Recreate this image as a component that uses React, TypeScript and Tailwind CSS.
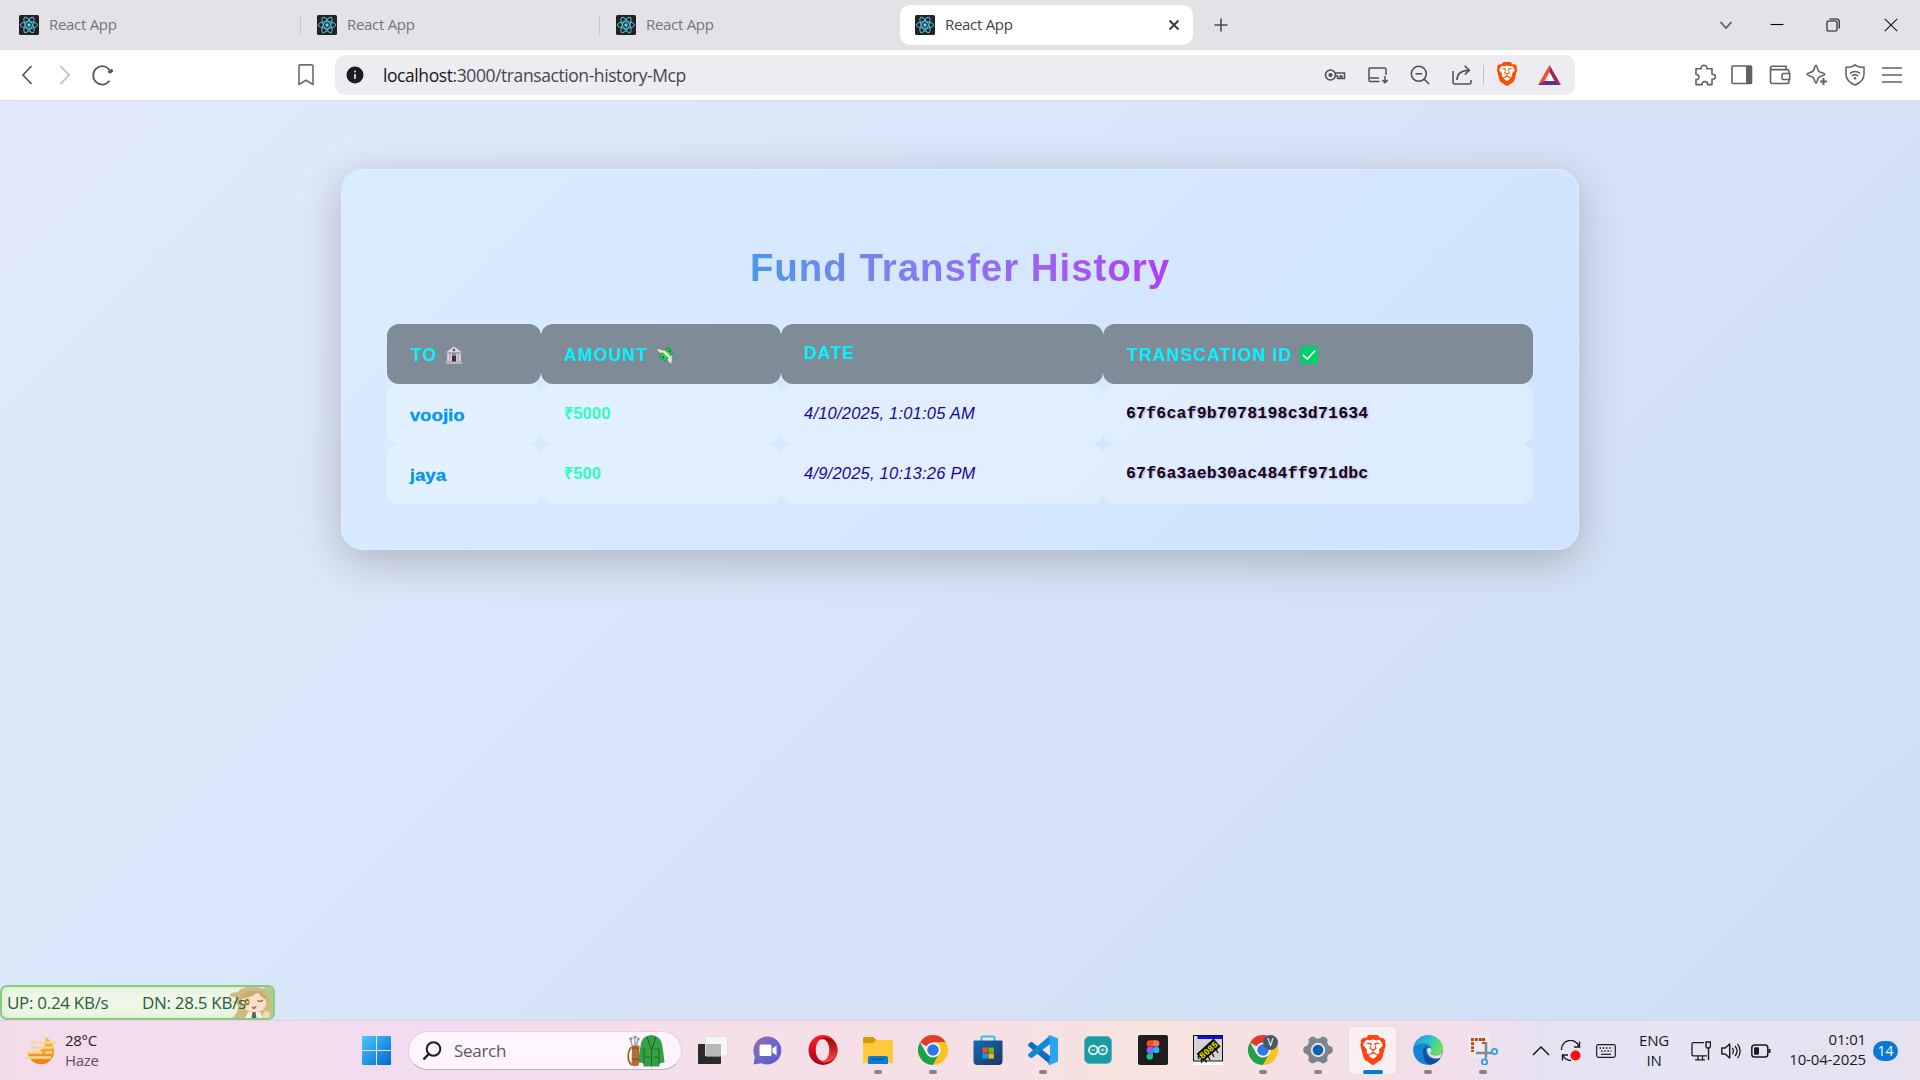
import React from "react";
import { SiBrave } from "react-icons/si";

type SvgProps = { w: number; h: number; vb?: string; className?: string; children: React.ReactNode };

function Svg({ w, h, vb, className, children }: SvgProps) {
  return (
    <svg width={w} height={h} viewBox={vb ?? `0 0 ${w} ${h}`} fill="none" className={className ?? "shrink-0"}>
      {children}
    </svg>
  );
}

/* ---------- Browser chrome ---------- */

function ReactFavicon() {
  return (
    <Svg w={20} h={20}>
      <rect width="20" height="20" rx="1.5" fill="#222222" />
      <g stroke="#53c1de" strokeWidth="1">
        <ellipse cx="10" cy="10" rx="8.6" ry="3.3" />
        <ellipse cx="10" cy="10" rx="8.6" ry="3.3" transform="rotate(60 10 10)" />
        <ellipse cx="10" cy="10" rx="8.6" ry="3.3" transform="rotate(120 10 10)" />
      </g>
      <circle cx="10" cy="10" r="1.7" fill="#61dafb" />
    </Svg>
  );
}

function Tab({ className, last }: { className: string; last?: boolean }) {
  return (
    <div className={`flex h-10 items-center ${className}`}>
      <ReactFavicon />
      <span className="mb-[2px] ml-[10px] text-[15px] tracking-[-0.3px] text-[#74757b]">React App</span>
      {!last && <span className="ml-auto h-5 w-px bg-[#c9c8cf]" />}
    </div>
  );
}

function TabBar() {
  return (
    <div className="flex h-[50px] items-center bg-[#e3e2e7]">
      <Tab className="ml-[19px] w-[282px]" />
      <Tab className="ml-4 w-[283px]" />
      <Tab className="ml-4 w-[284px]" last />
      <div className="flex h-10 w-[293px] items-center rounded-[10px] bg-white pr-[13px] pl-[15px]">
        <ReactFavicon />
        <span className="mb-[2px] ml-[10px] text-[15px] tracking-[-0.3px] text-[#3f4147]">React App</span>
        <Svg w={12} h={12} className="ml-auto shrink-0">
          <path d="M1.5 1.5l9 9M10.5 1.5l-9 9" stroke="#3c3d43" strokeWidth="2" />
        </Svg>
      </div>
      <Svg w={14} h={14} className="ml-[21px] shrink-0">
        <path d="M7 .5v13M.5 7h13" stroke="#4a4b51" strokeWidth="1.6" />
      </Svg>
      <div className="ml-auto flex items-center">
        <Svg w={14} h={10}>
          <path d="M1.5 2L7 8l5.5-6" stroke="#5c5d63" strokeWidth="1.8" />
        </Svg>
        <Svg w={14} h={14} className="mb-[3px] ml-[37px] shrink-0">
          <path d="M0.5 7.5h13" stroke="#000" strokeWidth="1.1" />
        </Svg>
        <Svg w={14} h={14} className="ml-[42px] shrink-0">
          <rect x="1" y="3" width="10" height="10" rx="1.2" stroke="#111" strokeWidth="1.1" />
          <path d="M3.5 1h7.3a2.4 2.4 0 012.4 2.4v7.2" stroke="#111" strokeWidth="1.1" />
        </Svg>
        <Svg w={14} h={14} className="mr-[22px] ml-[44px] shrink-0">
          <path d="M.8 .8l12.4 12.4M13.2 .8L.8 13.2" stroke="#111" strokeWidth="1.1" />
        </Svg>
      </div>
    </div>
  );
}

function BraveLogo({ size, fill }: { size: number; fill: string }) {
  return (
    <span className="grid shrink-0 place-items-center">
      <Svg w={size} h={size} vb="0 0 24 24" className="col-start-1 row-start-1">
        <path d="M6 4h12l2 5-2.500 9L12 21.500 6.500 18 4 9z" fill="#fff" />
      </Svg>
      <SiBrave size={size} color={fill} className="col-start-1 row-start-1" />
    </span>
  );
}

function AddressIcons() {
  return (
    <div className="ml-auto flex items-center text-[#4d4e55]">
      <Svg w={22} h={22}>
        <circle cx="6.500" cy="11" r="5" stroke="currentColor" strokeWidth="1.6" />
        <circle cx="6.500" cy="11" r="2.100" fill="currentColor" />
        <path d="M11.300 9h9.200v5.500h-2.700V12h-1.600v2.500h-2.600V12h-2.200" stroke="currentColor" strokeWidth="1.500" />
      </Svg>
      <Svg w={22} h={22} className="ml-[21px] shrink-0">
        <path d="M12.500 17.500H3.300A1.300 1.300 0 012 16.200V5.300A1.300 1.300 0 013.300 4h14.400A1.300 1.300 0 0119 5.300V11M2 14h10" stroke="currentColor" strokeWidth="1.500" />
        <path d="M18 12v6.500M15.300 16l2.700 2.700 2.700-2.700" stroke="currentColor" strokeWidth="1.500" />
      </Svg>
      <Svg w={22} h={22} className="ml-5 shrink-0">
        <circle cx="9.800" cy="9.800" r="7.500" stroke="currentColor" strokeWidth="1.500" />
        <path d="M6.500 9.800h6.600M15.300 15.300l4.700 4.700" stroke="currentColor" strokeWidth="1.600" />
      </Svg>
      <Svg w={22} h={22} className="ml-5 shrink-0">
        <path d="M2 7v11.300A1.700 1.700 0 003.700 20h14.600a1.700 1.700 0 001.700-1.700V16" stroke="currentColor" strokeWidth="1.500" />
        <path d="M6 16c0-6 3-9.500 12-9.800M13.600 1.800L18.300 6.300l-4.500 4.500" stroke="currentColor" strokeWidth="1.500" />
      </Svg>
      <span className="ml-[10px] h-5 w-px bg-[#bfbfc6]" />
      <span className="mb-[2px] ml-[11px]">
        <BraveLogo size={24} fill="#ff5000" />
      </span>
      <Svg w={23} h={20} className="mr-[14px] ml-[19px] shrink-0">
        <path d="M11.500 0L0 20l6.500-3.500L11.500 7z" fill="#ff4724" />
        <path d="M11.500 0L23 20l-6.500-3.500L11.500 7z" fill="#9e1f63" />
        <path d="M0 20h23l-6.500-4h-10z" fill="#662d91" />
        <path d="M11.500 7.500l-5 8.500h10z" fill="#fff" />
      </Svg>
    </div>
  );
}

function Toolbar() {
  return (
    <div className="flex h-[50px] items-center bg-white">
      <Svg w={12} h={20} className="ml-[21px] shrink-0">
        <path d="M10.500 1L2 10l8.500 9" stroke="#55565c" strokeWidth="1.700" />
      </Svg>
      <Svg w={12} h={20} className="ml-[26px] shrink-0">
        <path d="M1.500 1L10 10l-8.500 9" stroke="#bcbcc0" strokeWidth="1.700" />
      </Svg>
      <Svg w={24} h={22} className="ml-5 shrink-0">
        <path d="M18.500 16.800A9 9.200 0 1118.500 6" stroke="#55565c" strokeWidth="1.700" />
        <path d="M17 7.500a2.300 2.300 0 104-2.200z" fill="#55565c" stroke="#55565c" />
      </Svg>
      <Svg w={16} h={22} className="ml-[183px] shrink-0">
        <path d="M1 2.100A1.200 1.200 0 012.200.9h11.600a1.200 1.200 0 011.200 1.200V20.500l-7-4.200-7 4.200z" stroke="#6a6b71" strokeWidth="1.600" strokeLinejoin="round" />
      </Svg>
      <div className="ml-[21px] flex h-10 w-[1240px] items-center rounded-[10px] bg-[#edecf1] pl-[11px]">
        <Svg w={18} h={18}>
          <circle cx="9" cy="9" r="8.500" fill="#1c1b22" />
          <path d="M9 8v5" stroke="#edecf1" strokeWidth="1.600" />
          <circle cx="9" cy="5.500" r="1" fill="#edecf1" />
        </Svg>
        <span className="ml-[19px] text-[17.500px] tracking-[-0.420px] whitespace-nowrap text-[#45464d]">
          <span className="text-[#17171c]">localhost</span>:3000/transaction-history-Mcp
        </span>
        <AddressIcons />
      </div>
      <div className="ml-auto flex items-center gap-[15.500px] pr-[17px] text-[#606267]">
        <Svg w={22} h={22}>
          <path d="M2 4.700h5.300c-.3-2.500 1-3.500 2.700-3.500s3 1 2.700 3.500H18v5.500c2.500-.2 3.400 1 3.400 2.600S20.500 15.500 18 15.300v5.300h-4.500c.2-2-.9-3-2.700-3s-2.800 1-2.600 3H2v-5c2 .2 2.900-1 2.900-2.600S4 10.300 2 10.500z" stroke="currentColor" strokeWidth="1.600" strokeLinejoin="round" />
        </Svg>
        <Svg w={22} h={22}>
          <rect x="1" y="2" width="19.500" height="17.500" rx="1" stroke="currentColor" strokeWidth="1.600" />
          <rect x="15" y="2" width="6" height="18" fill="currentColor" />
        </Svg>
        <Svg w={22} h={22}>
          <path d="M1.500 3.500v14.300A1.700 1.700 0 003.200 19.500h15a1.700 1.700 0 001.700-1.700V7.300a1.700 1.700 0 00-1.700-1.700H3.200a1.600 1.600 0 010-3.400H17v3.200" stroke="currentColor" strokeWidth="1.600" />
          <path d="M20.700 9.500H14.500a1.500 1.500 0 00-1.500 1.500v3a1.500 1.500 0 001.500 1.500h6.200z" stroke="currentColor" strokeWidth="1.600" fill="#fff" />
        </Svg>
        <Svg w={22} h={22}>
          <path d="M10 1.300c.9 0 1.500 3.500 2.300 5.500 1 1.900 6.500 2 6.500 3.400s-5 1.900-6.300 3.400c-1 1.700-1.400 5.600-2.500 5.600s-1.500-4-2.700-5.600C5.800 12.200 1 11.600 1 10.200s5-1.500 6.300-3.400C8.500 4.800 9 1.300 10 1.300z" stroke="currentColor" strokeWidth="1.600" />
          <path d="M17.500 14v7M14 17.500h7" stroke="currentColor" strokeWidth="2" />
        </Svg>
        <Svg w={22} h={22}>
          <path d="M11 .8c2.500 2 5 2.500 9 2.500v7c0 5-3.500 8.500-9 10.700-5.500-2.200-9-5.700-9-10.700v-7c4 0 6.500-.5 9-2.500z" stroke="currentColor" strokeWidth="1.500" />
          <path d="M5.800 9.500c3-2.800 7.400-2.800 10.400 0M7.800 12c2-1.700 4.400-1.700 6.400 0" stroke="currentColor" strokeWidth="1.500" />
          <circle cx="11" cy="14.300" r="1.300" fill="currentColor" />
        </Svg>
        <Svg w={22} h={22}>
          <path d="M1 4h20M1 11h20M1 18h20" stroke="currentColor" strokeWidth="1.700" />
        </Svg>
      </div>
    </div>
  );
}

/* ---------- Transaction page ---------- */

function BankIcon() {
  return (
    <Svg w={18} h={18} className="ml-2 shrink-0">
      <path d="M9 .5l7.500 5.500v1H1.500V6z" fill="#dcd8dc" />
      <path d="M1 6h16v1.500H1z" fill="#aaa3a8" />
      <rect x="2.500" y="7.500" width="13" height="8" fill="#8d8690" />
      <path d="M2.200 7.500h2.300v8H2.200zM5.300 7.500h1.500v8H5.300zM11.200 7.500h1.500v8h-1.500zM13.500 7.500h2.300v8h-2.300z" fill="#dedadd" />
      <rect x="7" y="10" width="4" height="6" fill="#3b2a45" />
      <circle cx="9" cy="4" r="1.300" fill="#5a4766" />
      <path d="M.8 15.500h16.400V18H.8z" fill="#bcb5b4" />
    </Svg>
  );
}

function MoneyIcon() {
  return (
    <Svg w={18} h={18} className="ml-[9px] shrink-0">
      <path d="M5.500 7.500C3.500 7.500.8 5.500.3 2.800c2 .6 5 1.200 7 2.700zM14.500 9c.3 3.500.5 6-.2 8.700-1.500-1-3-2.500-4-4.200z" fill="#e6e6ea" />
      <path d="M1.300 10.500L10.800.8l6 5.200-8.600 9.800z" fill="#14a34f" />
      <path d="M2.800 10.500L11 2.500l4 3.600L8 14z" fill="#33cf72" />
      <path d="M5.300 5.800l6.300 6.200 1.800-1.900L7 3.900z" fill="#fff2a8" />
      <path d="M5.300 9.800l2 2M11.300 4.300l2 2" stroke="#0c7e3d" strokeWidth="1.700" />
    </Svg>
  );
}

function CheckIcon() {
  return (
    <Svg w={18} h={18} className="ml-[8px] shrink-0">
      <rect width="18" height="18" rx="2" fill="#00cf6b" />
      <path d="M3.500 9.300l3.800 3.700L14.700 5" stroke="#fff" strokeWidth="1.800" strokeLinecap="round" />
    </Svg>
  );
}

const columns = "grid grid-cols-[154px_240px_322px_430px]";

const headers: { label: string; icon?: React.ReactNode; pad: string }[] = [
  { label: "TO", icon: <BankIcon />, pad: "pt-[2px] pl-[24px]" },
  { label: "AMOUNT", icon: <MoneyIcon />, pad: "pt-[2px] pl-[23px]" },
  { label: "DATE", pad: "pb-[2px] pl-[23px]" },
  { label: "TRANSCATION ID", icon: <CheckIcon />, pad: "pt-[2px] pl-[24px]" },
];

const rows = [
  { to: "voojio", amount: "₹5000", date: "4/10/2025, 1:01:05 AM", id: "67f6caf9b7078198c3d71634" },
  { to: "jaya", amount: "₹500", date: "4/9/2025, 10:13:26 PM", id: "67f6a3aeb30ac484ff971dbc" },
];

function HistoryCard() {
  return (
    <main className="mx-auto flex h-[381px] w-[1238px] flex-col rounded-[22px] border border-[#e2eeff] bg-[linear-gradient(135deg,#d9ecff_0%,#d6e8ff_45%,#cfe3ff_100%)] px-[45px] font-['Liberation_Sans',Arial,sans-serif] shadow-[0_11px_44px_rgba(0,0,0,0.22)]">
      <h1 className="mx-auto mt-[73px] h-[50px] bg-linear-to-r from-[#4a98e8] to-[#b03cf6] bg-clip-text text-[38.500px] leading-[50px] font-bold tracking-[0.960px] whitespace-nowrap text-transparent">
        Fund Transfer History
      </h1>
      <div className="mt-[31px] w-[1146px]">
        <div className={columns}>
          {headers.map((h) => (
            <div key={h.label} className={`flex h-[60px] items-center rounded-[12px] bg-[#808b98] text-[17.600px] font-bold tracking-[1.150px] text-[#00f4ff] ${h.pad}`}>
              {h.label}
              {h.icon}
            </div>
          ))}
        </div>
        {rows.map((r) => (
          <div key={r.id} className={`${columns} *:flex *:h-[60px] *:items-center *:rounded-[12px] *:bg-white/28 *:pl-[23px]`}>
            <div className="pt-[2px] text-[16.500px] font-bold text-[#0a95f2]">
              <span className="origin-left scale-x-[1.13] [-webkit-text-stroke:0.350px_#0a95f2]">{r.to}</span>
            </div>
            <div className="pb-[2px] text-[16.500px] font-bold tracking-[0.150px] text-[#2dfdbd]">{r.amount}</div>
            <div className="pb-[2px] text-[16.500px] tracking-[0.220px] text-[#1d0599] italic">{r.date}</div>
            <div className="font-['Liberation_Mono','Courier_New',monospace] text-[16.500px] font-bold tracking-[0.200px] text-[#12061c] [text-shadow:1px_1px_2px_rgba(90,0,90,0.3)]">{r.id}</div>
          </div>
        ))}
      </div>
    </main>
  );
}

function NetMeter() {
  return (
    <div className="absolute bottom-0 left-0 flex h-[35px] w-[275px] items-center rounded-[7px] border-2 border-[#8cc983] bg-[#eef7e8] pl-[5px] text-[17px] tracking-[-0.300px] whitespace-nowrap text-[#2c5c38] shadow-[inset_0_0_8px_#cdebbb]">
      <span className="z-10 w-[135px]">UP: 0.24 KB/s</span>
      <span className="z-10">DN: 28.5 KB/s</span>
      <Svg w={46} h={31} className="absolute right-0 bottom-0">
        <rect x="36" width="10" height="31" rx="3" fill="#a9cf92" />
        <path d="M2 9c3-5 7-3 9-4C15 0 20 0 27 0c10 0 15 6 16 12l1 15v4H5c4-3 6-7 6-12-1-3-3-2-6-4 3 0 4-1 4-3-2-3-4-2-7-3z" fill="#cfba82" />
        <path d="M15 10c5-5 18-6 24 0v8c-2 5-6 7-12 7s-10-3-12-7z" fill="#f8e1c8" />
        <path d="M13 12c1-9 22-14 28 1-5-1-8-4-10-8-4 4-11 6-18 7z" fill="#c6ad6c" />
        <ellipse cx="20" cy="15" rx="2.400" ry="3.200" fill="#8a7430" />
        <circle cx="20.300" cy="15.200" r="1.200" fill="#f2dc6a" />
        <path d="M30.500 13.500c2 1.300 4 1 5.500-.5" stroke="#83622c" strokeWidth="1.200" />
        <path d="M24.500 19.500c2 1 4 0 5-1 0 4-4 5-5 1z" fill="#d65a4a" />
        <path d="M18 31l3-6h12l3 6z" fill="#f2f2ea" />
        <path d="M25.500 25h3l1 6h-5z" fill="#4f6b5a" />
        <path d="M36.500 31c-2-3 0-7 3-7s4 3 3 7z" fill="#f3dcb4" />
      </Svg>
    </div>
  );
}

/* ---------- Taskbar ---------- */

function TaskViewIcon() {
  return (
    <Svg w={30} h={28}>
      <rect x="0" y="8" width="23" height="20" rx="1" fill="#2b2a2a" />
      <rect x="7.500" y=".5" width="22" height="19.500" rx="1" fill="#f5f5f5" stroke="#e0dede" />
      <path d="M8 8h15v12H8z" fill="#b9b7b7" />
    </Svg>
  );
}

function ChatIcon() {
  return (
    <Svg w={30} h={29}>
      <defs>
        <linearGradient id="chat" x1="0" y1="0" x2="1" y2="1">
          <stop offset="0" stopColor="#9a6fa0" />
          <stop offset=".5" stopColor="#6a68c8" />
          <stop offset="1" stopColor="#5b57cf" />
        </linearGradient>
      </defs>
      <path d="M15 .5a14 14 0 11-6.500 26.700L.7 28.500l1-8A14 14 0 0115 .5z" fill="url(#chat)" />
      <rect x="6.500" y="8.500" width="12" height="11.500" rx="1.500" fill="#fff" />
      <path d="M19.500 12.500l4-3v10l-4-3z" fill="#fff" />
    </Svg>
  );
}

function OperaIcon() {
  return (
    <Svg w={30} h={30}>
      <defs>
        <linearGradient id="op" x1="0" y1="0" x2="0" y2="1">
          <stop offset="0" stopColor="#ff1b2d" />
          <stop offset="1" stopColor="#a70014" />
        </linearGradient>
        <linearGradient id="op2" x1="0" y1="0" x2="0" y2="1">
          <stop offset="0" stopColor="#9c0000" />
          <stop offset="1" stopColor="#ff4b4b" />
        </linearGradient>
      </defs>
      <ellipse cx="15" cy="15" rx="14.500" ry="15" fill="url(#op)" />
      <path d="M10 4.500C15 0 29.500 3 29.500 15S15 30 10 25.500c5 3 11-2 11-10.500S15 1.500 10 4.500z" fill="url(#op2)" />
      <ellipse cx="14.500" cy="15" rx="6.800" ry="11" fill="#f5dfe8" />
    </Svg>
  );
}

function FolderIcon() {
  return (
    <Svg w={30} h={27}>
      <path d="M0 1.500A1.500 1.500 0 011.500 0h9l3 3-3 4H0z" fill="#d9980a" />
      <path d="M0 6h10l3-3h15.500A1.500 1.500 0 0130 4.500V26H0z" fill="#fccb3c" />
      <path d="M5 27v-6.500A1.800 1.800 0 016.800 19h16.400a1.800 1.800 0 011.800 1.500V27z" fill="#0f7bd0" />
      <path d="M8.500 22.500h13" stroke="#0a4f93" strokeWidth="1.200" />
    </Svg>
  );
}

function ChromeIcon({ badge }: { badge?: boolean }) {
  return (
    <Svg w={30} h={30}>
      <path d="M15 15L2 7.500A15 15 0 0128 7.500L15 7.500z" fill="#e33b2e" />
      <path d="M2 7.500A15 15 0 0015 30l6.500-11.300L15 15l-6.500 3.700z" fill="#21a045" />
      <path d="M28 7.500A15 15 0 0115 30l6.500-11.300L15 7.500z" fill="#fcc31e" />
      <circle cx="15" cy="15" r="7.500" fill="#fff" />
      <circle cx="15" cy="15" r="5.800" fill="#2f78ea" />
      {badge && (
        <>
          <circle cx="22.500" cy="7.500" r="7.500" fill="#455a64" />
          <text x="22.500" y="11.200" textAnchor="middle" fontSize="10" fill="#fff" fontFamily="Roboto, sans-serif">V</text>
        </>
      )}
    </Svg>
  );
}

function StoreIcon() {
  return (
    <Svg w={30} h={30}>
      <defs>
        <linearGradient id="store" x1="0" y1="0" x2="1" y2="1">
          <stop offset="0" stopColor="#0d6dba" />
          <stop offset="1" stopColor="#20335f" />
        </linearGradient>
      </defs>
      <path d="M8.500 6V3A1.500 1.500 0 0110 1.500h10A1.500 1.500 0 0121.500 3v3" stroke="#2fc0f0" strokeWidth="2" />
      <path d="M.5 6.500a1 1 0 011-1h27a1 1 0 011 1V26a4 4 0 01-4 4h-21a4 4 0 01-4-4z" fill="url(#store)" />
      <path d="M9.500 12.500h5.300v5.200H9.500z" fill="#f25022" />
      <path d="M15.500 12.500h5.300v5.200h-5.300z" fill="#7fba00" />
      <path d="M9.500 18.400h5.300v5.200H9.500z" fill="#00a4ef" />
      <path d="M15.500 18.400h5.300v5.200h-5.300z" fill="#ffb900" />
    </Svg>
  );
}

function VsCodeIcon() {
  return (
    <Svg w={30} h={30}>
      <path d="M0 9.200l2.500-2L4 7l18 14v8.500L.3 11z" fill="#0a6fb8" />
      <path d="M0 20.800l2.500 2L4 23 22 9V.5L.3 19z" fill="#0b8ad6" />
      <path d="M21.500 0L30 3.500v23L21.500 30c-.5 0-1-.5-1-1l1.500-7V8l-1.500-7c0-.5.500-1 1-1z" fill="#29a3f2" />
    </Svg>
  );
}

function ArduinoIcon() {
  return (
    <Svg w={28} h={28}>
      <rect x=".5" y=".5" width="27" height="27" rx="5" fill="#1c9ca2" stroke="#5bb9bb" />
      <circle cx="9.300" cy="14" r="4.300" stroke="#d8efef" strokeWidth="1.900" />
      <circle cx="18.700" cy="14" r="4.300" stroke="#d8efef" strokeWidth="1.900" />
      <path d="M7.700 14h3.200M17 14h3.400M18.700 12.300v3.400" stroke="#d8efef" strokeWidth="1" />
    </Svg>
  );
}

function FigmaIcon() {
  return (
    <Svg w={30} h={30}>
      <rect width="30" height="30" rx="2" fill="#1e1e1e" />
      <path d="M15 5.200h-3.200a3.200 3.200 0 000 6.400H15z" fill="#f24e1e" />
      <path d="M15 5.200h3.200a3.200 3.200 0 010 6.400H15z" fill="#ff7262" />
      <path d="M15 11.700h-3.200a3.200 3.200 0 000 6.400H15z" fill="#a259ff" />
      <circle cx="18.200" cy="14.900" r="3.200" fill="#1abcfe" />
      <path d="M15 18.200h-3.200A3.200 3.200 0 1015 21.400z" fill="#0acf83" />
    </Svg>
  );
}

function SimulatorIcon() {
  return (
    <Svg w={30} h={30}>
      <rect width="30" height="30" fill="#fff" />
      <rect x=".5" y=".5" width="29" height="25.500" fill="#d4d4d4" stroke="#111" />
      <rect x="4.500" y="1" width="24.500" height="3" fill="#0d10e0" />
      <path d="M3.500 19L20.500 3.500l7 8L10.500 26z" fill="#0b0b0b" />
      <path d="M8 24l1 4M11.500 23.500l2 4M15 21l2 4M19 18l2 4M23 14l2 4M5 21l1 3" stroke="#111" strokeWidth="1.300" />
      <text x="15.500" y="18" fontSize="9" fontWeight="bold" textAnchor="middle" fill="#e9e300" fontFamily="'Liberation Mono', monospace" transform="rotate(-41 15.500 15)">8085</text>
    </Svg>
  );
}

function SettingsIcon() {
  return (
    <Svg w={30} h={30}>
      <g fill="#7b858d">
        <circle cx="15" cy="15" r="11.500" />
        {[0, 60, 120, 180, 240, 300].map((a) => (
          <path key={a} d="M23 9.500l6 2.500q1.500 3 0 6l-6 2.500z" transform={`rotate(${a} 15 15)`} />
        ))}
      </g>
      <circle cx="15" cy="15" r="7.200" fill="#eee3e6" />
      <circle cx="15" cy="15" r="5.300" fill="#0f62b0" />
    </Svg>
  );
}

function EdgeIcon() {
  return (
    <Svg w={30} h={30}>
      <defs>
        <linearGradient id="edgeTop" x1="0" y1="0" x2="1" y2=".4">
          <stop offset="0" stopColor="#1b8fd8" />
          <stop offset=".5" stopColor="#2cbfd6" />
          <stop offset="1" stopColor="#6be05a" />
        </linearGradient>
      </defs>
      <circle cx="15" cy="15" r="14.800" fill="#1384d3" />
      <path d="M.5 13C2 5 8 .2 15 .2 23.500.2 30 6 30 13c0 5-4 7.500-8 7.500-3 0-5-1-5-2.200 0-1 1.500-1.500 1.500-4C18.500 11 15 8.500 10.500 8.500S2 10 .5 13z" fill="url(#edgeTop)" />
      <path d="M10 17c0-4 3-6 5.500-6-2 1.500-3 3-2.500 6 .8 4.500 5 7 9.500 7 2.500 0 4-1 5-1C25 27 20 30 16 29.800 12 28 10 22 10 17z" fill="#0f4f9c" />
      <path d="M14 14.500c.5-2 4-2 4.500 0 0 2-1.500 2.800-1.500 3.800 0 1.500 2.500 2.500 6 2.200 3-.2 5-1.500 6-3-.5 2.500-1 4-1.800 5.200C21 25 14.500 22 14 14.500z" fill="#f3dfe9" />
    </Svg>
  );
}

function SnipIcon() {
  return (
    <Svg w={30} h={30}>
      <rect width="22" height="22" rx="2" fill="#ecebed" />
      <path d="M3 4.500h14M4.500 7.300V17M15.500 3v6" stroke="#c9350f" strokeWidth="2.800" strokeDasharray="2.800 1.100" />
      <path d="M18 7v15.500M8 18h15" stroke="#858b93" strokeWidth="2.600" />
      <circle cx="26.500" cy="16.500" r="2.700" stroke="#2a9fe5" strokeWidth="1.700" />
      <circle cx="16.500" cy="27" r="2.700" stroke="#2a9fe5" strokeWidth="1.700" />
      <path d="M18 22l-1 2.500M22 18l2.500-.8" stroke="#2a9fe5" strokeWidth="1.500" />
    </Svg>
  );
}

function BraveTaskIcon() {
  return <BraveLogo size={30} fill="#ff4412" />;
}

const apps: { name: string; icon: React.ReactNode; state?: "running" | "active" }[] = [
  { name: "taskview", icon: <TaskViewIcon /> },
  { name: "chat", icon: <ChatIcon /> },
  { name: "opera", icon: <OperaIcon /> },
  { name: "files", icon: <FolderIcon />, state: "running" },
  { name: "chrome", icon: <ChromeIcon />, state: "running" },
  { name: "store", icon: <StoreIcon /> },
  { name: "vscode", icon: <VsCodeIcon />, state: "running" },
  { name: "arduino", icon: <ArduinoIcon /> },
  { name: "figma", icon: <FigmaIcon /> },
  { name: "8085", icon: <SimulatorIcon /> },
  { name: "chrome-v", icon: <ChromeIcon badge />, state: "running" },
  { name: "settings", icon: <SettingsIcon />, state: "running" },
  { name: "brave", icon: <BraveTaskIcon />, state: "active" },
  { name: "edge", icon: <EdgeIcon />, state: "running" },
  { name: "snip", icon: <SnipIcon />, state: "running" },
];

function AppButton({ icon, state }: { icon: React.ReactNode; state?: "running" | "active" }) {
  const tile = state === "active" ? "border-[#eadde3] bg-[#faf0f4]" : "border-transparent";
  return (
    <div className="flex w-[55px] justify-center">
      <div className={`flex h-[49px] w-[49px] flex-col items-center rounded-[5px] border ${tile}`}>
        <div className="mt-[7px] flex h-[32px] items-center">{icon}</div>
        {state === "active" && <span className="mt-[4px] h-1 w-5 rounded-full bg-[#0a78d4]" />}
        {state === "running" && <span className="mt-[4px] h-1 w-2 rounded-full bg-[#8a8085]" />}
      </div>
    </div>
  );
}

function Tray() {
  return (
    <div className="ml-auto flex h-full items-center pr-[22px] text-[#1b1b1f]">
      <Svg w={18} h={10}>
        <path d="M1 9l8-8 8 8" stroke="currentColor" strokeWidth="1.500" />
      </Svg>
      <Svg w={22} h={22} className="ml-[10px] shrink-0">
        <path d="M1.500 10A9 9 0 0119 6.500M19.500 1.500v5.500H14M11 20.500a9 9 0 01-8-5M2.500 20.500V15H8" stroke="currentColor" strokeWidth="1.400" />
        <circle cx="15.500" cy="15.500" r="5" fill="#ff0a0a" />
      </Svg>
      <Svg w={20} h={14} className="ml-[14px] shrink-0">
        <rect x=".7" y=".7" width="18.600" height="12.600" rx="1.800" stroke="currentColor" strokeWidth="1.200" />
        <path d="M3.500 4h13M5 7h10.500" stroke="currentColor" strokeWidth="1.500" strokeDasharray="1.500 1.700" />
        <path d="M5 10.300h10" stroke="currentColor" strokeWidth="1.200" />
      </Svg>
      <div className="mb-[2px] ml-[18px] w-10 text-center text-[15px] leading-[20px] tracking-[-0.200px]">
        ENG
        <br />
        IN
      </div>
      <Svg w={20} h={20} className="ml-[17px] shrink-0">
        <path d="M13 1.700H2.200A1.200 1.200 0 001 2.900v10.700a1.200 1.200 0 001.200 1.200H16M7 15v3.500M11.500 15v3.500M4 18.800h10" stroke="currentColor" strokeWidth="1.300" />
        <path d="M15 1h4.500v4.500L18.500 7H16l-1-1.500zM17.500 7v12" stroke="currentColor" strokeWidth="1.400" />
      </Svg>
      <Svg w={20} h={18} className="ml-[10px] shrink-0">
        <path d="M.8 6v6h3.400l4.500 4V2L4.200 6z" stroke="currentColor" strokeWidth="1.400" strokeLinejoin="round" />
        <path d="M11.300 6c1.400 1.800 1.400 4.200 0 6M14 4c2.500 3 2.500 7 0 10M16.500 1.800c3.500 4.300 3.500 10 0 14.400" stroke="currentColor" strokeWidth="1.300" />
      </Svg>
      <Svg w={20} h={14} className="ml-[10px] shrink-0">
        <rect x=".8" y="1" width="16" height="12" rx="2.800" stroke="currentColor" strokeWidth="1.500" />
        <rect x="3" y="3.200" width="5" height="7.600" rx="1" fill="currentColor" />
        <path d="M18.500 5v4" stroke="currentColor" strokeWidth="2" />
      </Svg>
      <div className="mb-[4px] ml-[15px] w-[80px] text-right text-[15px] leading-[20px] tracking-[-0.150px] whitespace-nowrap">
        01:01
        <br />
        10-04-2025
      </div>
      <span className="ml-[7px] flex h-[20px] w-[25px] items-center justify-center rounded-full bg-[#0a78d4] text-[14px] text-white">14</span>
    </div>
  );
}

function Taskbar() {
  return (
    <div className="flex h-[60px] items-center border-t border-[#e8cfe0] bg-[linear-gradient(90deg,#f3dcea_0%,#f1dcf0_22%,#f5dfe9_38%,#f6e0e6_52%,#f7e3de_60%,#f5e0e4_66%,#f1deea_76%,#e6e1f1_80%,#e5e5f3_88%,#e7e1f0_100%)]">
      <div className="flex w-[335px] items-center pl-[26px]">
        <Svg w={30} h={28}>
          <defs>
            <linearGradient id="moon" x1="0" y1="0" x2="0" y2="1">
              <stop offset="0" stopColor="#f5bf4e" />
              <stop offset="1" stopColor="#f07c12" />
            </linearGradient>
          </defs>
          <path d="M19 0c12 5 12 22 1 26.500C12 29 3 25 2 16c8 2 20-4 17-16z" fill="url(#moon)" />
          <g stroke="#f4d98a" strokeWidth="2.600" strokeLinecap="round">
            <path d="M6 5.500h4M14 5.500h15M6 10.500h20M1.500 15.500h14M20 15.500h5M2 20.500h22" />
          </g>
        </Svg>
        <div className="mb-[2px] ml-[9px] text-[15px] leading-[20px] tracking-[-0.300px] text-[#222]">
          28°C
          <br />
          <span className="text-[#5d5560]">Haze</span>
        </div>
      </div>
      <Svg w={29} h={29} className="ml-[27px] shrink-0">
        <defs>
          <linearGradient id="win" x1="0" y1="0" x2="1" y2="1">
            <stop offset="0" stopColor="#4cc8fb" />
            <stop offset="1" stopColor="#0068cf" />
          </linearGradient>
        </defs>
        <path d="M0 1a1 1 0 011-1h13v14H0zM15 0h13a1 1 0 011 1v13H15zM0 15h14v14H1a1 1 0 01-1-1zM15 15h14v13a1 1 0 01-1 1H15z" fill="url(#win)" />
      </Svg>
      <div className="ml-[17px] flex h-[39px] w-[274px] items-center rounded-full border border-[#e3cfdf] border-b-[#bfaebf] bg-[#fcf5fb] pr-[16px] pl-[13px]">
        <Svg w={20} h={20}>
          <circle cx="11.500" cy="8" r="6.800" stroke="#1c1a1d" strokeWidth="2" />
          <path d="M6.700 13L1.500 18.500" stroke="#1c1a1d" strokeWidth="2.400" />
        </Svg>
        <span className="ml-[12px] text-[17px] tracking-[-0.300px] text-[#5e585f]">Search</span>
        <Svg w={38} h={32} className="ml-auto shrink-0">
          <path d="M5 11L3.500 3M8 11V2M9 11l2.500-7" stroke="#a2a2b2" strokeWidth="1.500" />
          <path d="M2.500 4.500l3-1.500M6.500 2.500l3-1M10 4.500l2.500-1" stroke="#8d8da0" strokeWidth="2.200" />
          <path d="M4.500 12C0 17 0 27 5 30" stroke="#9c5427" strokeWidth="1.600" />
          <path d="M5 10.500h7.500L12 30c-2 1.500-6 1.500-7.500 0z" fill="#b66c35" />
          <path d="M5 13h7M5 24h7" stroke="#7d4320" strokeWidth="1.200" />
          <path d="M18 2l4-1.500L24 0l3 .5L30 2c4 2 5 6 5.500 10 .8 5 1.500 10 2 15.500l-5 .5v3.500H16.500V28l-5-.5c.2-6 1-11 2-16C14 7 15 4 18 2z" fill="#35a046" />
          <path d="M20 1.500l4.500 14L29 1.500M24.500 15.500v16M17 13v16M32 13v16M18.500 22h4M27 22h4M27.500 14h3" stroke="#1c6e2c" strokeWidth="1.100" />
        </Svg>
      </div>
      <div className="ml-[3px] flex">
        {apps.map((a) => (
          <AppButton key={a.name} icon={a.icon} state={a.state} />
        ))}
      </div>
      <Tray />
    </div>
  );
}

export default function App() {
  return (
    <div className="flex h-[1080px] w-[1920px] flex-col overflow-hidden font-['Open_Sans','Noto_Sans',sans-serif]">
      <TabBar />
      <Toolbar />
      <div className="relative flex-1 border-t border-[#dcdde3] bg-[linear-gradient(135deg,#e0eafc,#cfdef3)] pt-[68px]">
        <HistoryCard />
        <NetMeter />
      </div>
      <Taskbar />
    </div>
  );
}
